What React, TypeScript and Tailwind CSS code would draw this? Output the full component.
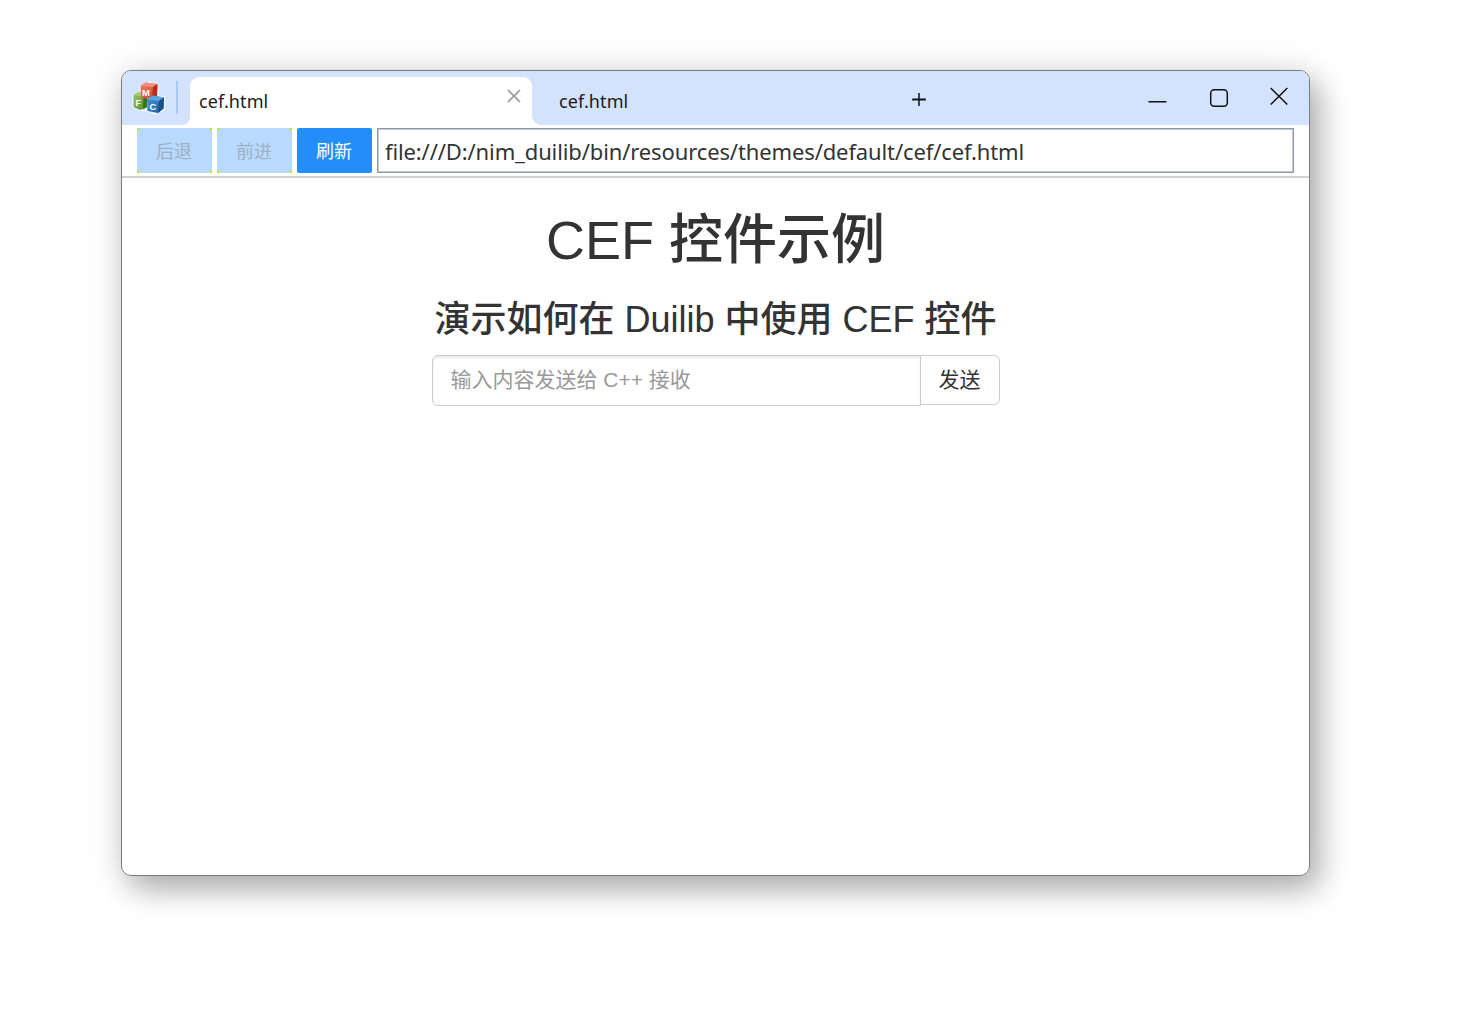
import React from "react";

const ui = "font-['Noto_Sans','Noto_Sans_CJK_SC',sans-serif]";

function BlocksLogo() {
  return (
    <svg width="34" height="34" viewBox="0 0 34 34" className="block shrink-0">
      <defs>
        <linearGradient id="red" x1="0" y1="0" x2="1" y2="1">
          <stop offset="0" stopColor="#f08468" />
          <stop offset="1" stopColor="#cf3a22" />
        </linearGradient>
        <linearGradient id="green" x1="0" y1="0" x2="1" y2="1">
          <stop offset="0" stopColor="#9fc865" />
          <stop offset="1" stopColor="#4b8a1c" />
        </linearGradient>
        <linearGradient id="blue" x1="0" y1="0" x2="1" y2="1">
          <stop offset="0" stopColor="#4f9bd8" />
          <stop offset="1" stopColor="#175a9c" />
        </linearGradient>
      </defs>
      <path
        d="M8 5 16 1 26 3 26 15 33 16 32 29 23 33 15 30 7 29 1 26 1 15 8 11Z"
        fill="#e9f1fe"
        stroke="#ffffff"
        strokeWidth="1.4"
        strokeDasharray="1.5 1"
      />
      <path d="M1.500 14 7 11 15 13 15 26 8 29 1.500 26Z" fill="url(#green)" />
      <path d="M1.500 14 7 11 15 13 11 16Z" fill="#a5cb72" />
      <path d="M11.500 16 15 13 15 26 11 28.500Z" fill="#387416" />
      <path d="M8.500 4.500 14 1.500 25.500 3 25 15 20 18.500 9 16.500Z" fill="url(#red)" />
      <path d="M8.500 4.500 14 1.500 25.500 3 21 6Z" fill="#f0907a" />
      <path d="M21 6 25.500 3 25 15 20 18.500Z" fill="#b92c1b" />
      <path d="M15 18 21 14.500 32 16.500 31.500 27.500 26 32 15.500 30Z" fill="url(#blue)" />
      <path d="M15 18 21 14.500 32 16.500 27 20Z" fill="#5ba4df" />
      <path d="M27 20 32 16.500 31.500 27.500 26 32Z" fill="#17508b" />
      <g fill="#fff" fontFamily="Liberation Sans, sans-serif" fontWeight="700">
        <text x="10" y="14.500" fontSize="9.500">M</text>
        <text x="3.500" y="25" fontSize="9">F</text>
        <text x="17.500" y="28.500" fontSize="9.500">C</text>
      </g>
    </svg>
  );
}

function NavButton({ label }: { label: string }) {
  return (
    <button className="flex h-[45px] w-[75px] items-center justify-center bg-[#b8dafe] bg-[linear-gradient(#cbe600,#cbe600),linear-gradient(#cbe600,#cbe600),linear-gradient(#cbe600,#cbe600),linear-gradient(#cbe600,#cbe600)] bg-[length:2px_2px] bg-[position:0_0,100%_0,0_100%,100%_100%] bg-no-repeat pr-px text-[18px] text-[#9fb0c3]">
      <span className="leading-[26px]">{label}</span>
    </button>
  );
}

function TitleBar() {
  return (
    <header className="flex h-[54px] bg-[#d3e2fd]">
      <div className="flex w-[68px] items-start pt-[10px] pl-[10px]">
        <BlocksLogo />
        <div className="ml-[10px] h-[33px] w-[2px] bg-[#a8c7fa]" />
      </div>
      <div className="relative mt-[6px] flex h-[48px] w-[342px] rounded-t-[9px] bg-white pl-[9px] text-[18px] text-[#1a1a1a]">
        <div className="absolute bottom-0 -left-[7px] size-[7px] bg-[radial-gradient(circle_at_0_0,transparent_6.500px,white_7px)]" />
        <div className="absolute -right-[9px] bottom-0 size-[9px] bg-[radial-gradient(circle_at_100%_0,transparent_8.500px,white_9px)]" />
        <span className="mt-[11px] leading-[26px] tracking-[0.1px]">cef.html</span>
        <svg width="14" height="14" viewBox="0 0 14 14" className="mt-[12px] mr-[11px] ml-auto" stroke="#999" strokeWidth="1.700">
          <path d="M1 1 13 13M13 1 1 13" />
        </svg>
      </div>
      <div className="w-[379px] pt-[17px] pl-[27px] text-[18px] text-[#1a1a1a]">
        <span className="block leading-[26px] tracking-[0.1px]">cef.html</span>
      </div>
      <svg width="16" height="16" viewBox="0 0 16 16" className="mt-[21px]">
        <path d="M8 1V14" stroke="#3c4350" strokeWidth="2" />
        <path d="M1.200 7.500H14.800" stroke="#111" strokeWidth="2" />
      </svg>
      <div className="mt-[15px] mr-[20px] ml-auto flex gap-[40px]">
        <svg width="20" height="22" viewBox="0 0 20 22" fill="none" stroke="#111" strokeWidth="1.500">
          <path d="M1.500 15.700H19.500" />
        </svg>
        <svg width="22" height="22" viewBox="0 0 22 22" fill="none" stroke="#111" strokeWidth="1.500">
          <rect x="3.700" y="3.700" width="16.600" height="16.600" rx="3.500" />
        </svg>
        <svg width="20" height="22" viewBox="0 0 20 22" fill="none" stroke="#111" strokeWidth="1.500">
          <path d="M1.700 2 18.300 18.500M18.300 2 1.700 18.500" />
        </svg>
      </div>
    </header>
  );
}

export default function App() {
  return (
    <div className="h-[1023px] w-[1477px] overflow-hidden bg-white pt-[70px] pl-[121px]">
      <div className="h-[806px] w-[1189px] rounded-[10px] shadow-[0_2px_36px_rgba(0,0,0,0.13),10px_14px_30px_rgba(0,0,0,0.27)]">
        <div className={`flex h-full flex-col overflow-hidden rounded-[10px] border border-[#7c7c7c] bg-white ${ui}`}>
          <TitleBar />
          <div className="flex h-[53px] gap-[5px] border-b-2 border-[#d2d2d2] pt-[3px] pr-[15px] pl-[15px]">
            <NavButton label="后退" />
            <NavButton label="前进" />
            <button className="flex h-[45px] w-[75px] items-center justify-center rounded-[2px] bg-[#238efa] pr-px text-[18px] text-white">
              <span className="leading-[26px]">刷新</span>
            </button>
            <div className="flex h-[45px] flex-1 items-center border border-[#8b99a8] pl-[7px] text-[22px] text-[#333] shadow-[inset_0_0_0_1px_#c3cad3]">
              <span className="leading-[30px] tracking-[-0.12px] whitespace-nowrap">
                file:///D:/nim_duilib/bin/resources/themes/default/cef/cef.html
              </span>
            </div>
          </div>
          <main className="flex flex-col items-center font-['Liberation_Sans','Noto_Sans_CJK_SC',sans-serif] text-[#333]">
            <h1 className="mt-[32px] text-[54px] leading-[60px] font-medium whitespace-nowrap">CEF 控件示例</h1>
            <h3 className="mt-[30px] text-[36px] leading-[40px] font-medium whitespace-nowrap">
              演示如何在 Duilib 中使用 CEF 控件
            </h3>
            <div className="mt-[15px] flex w-[568px] items-start text-[21px]">
              <div className="flex h-[51px] w-[489px] items-center rounded-l-[6px] border border-[#ccc] pb-[2px] pl-[18px] text-[#999] shadow-[inset_0_2px_2px_rgba(0,0,0,0.075)]">
                <span className="leading-[30px]">输入内容发送给 C++ 接收</span>
              </div>
              <button className="-ml-px flex h-[50px] w-[80px] items-center justify-center rounded-r-[6px] border border-[#ccc] pb-px">
                <span className="leading-[30px]">发送</span>
              </button>
            </div>
          </main>
        </div>
      </div>
    </div>
  );
}
